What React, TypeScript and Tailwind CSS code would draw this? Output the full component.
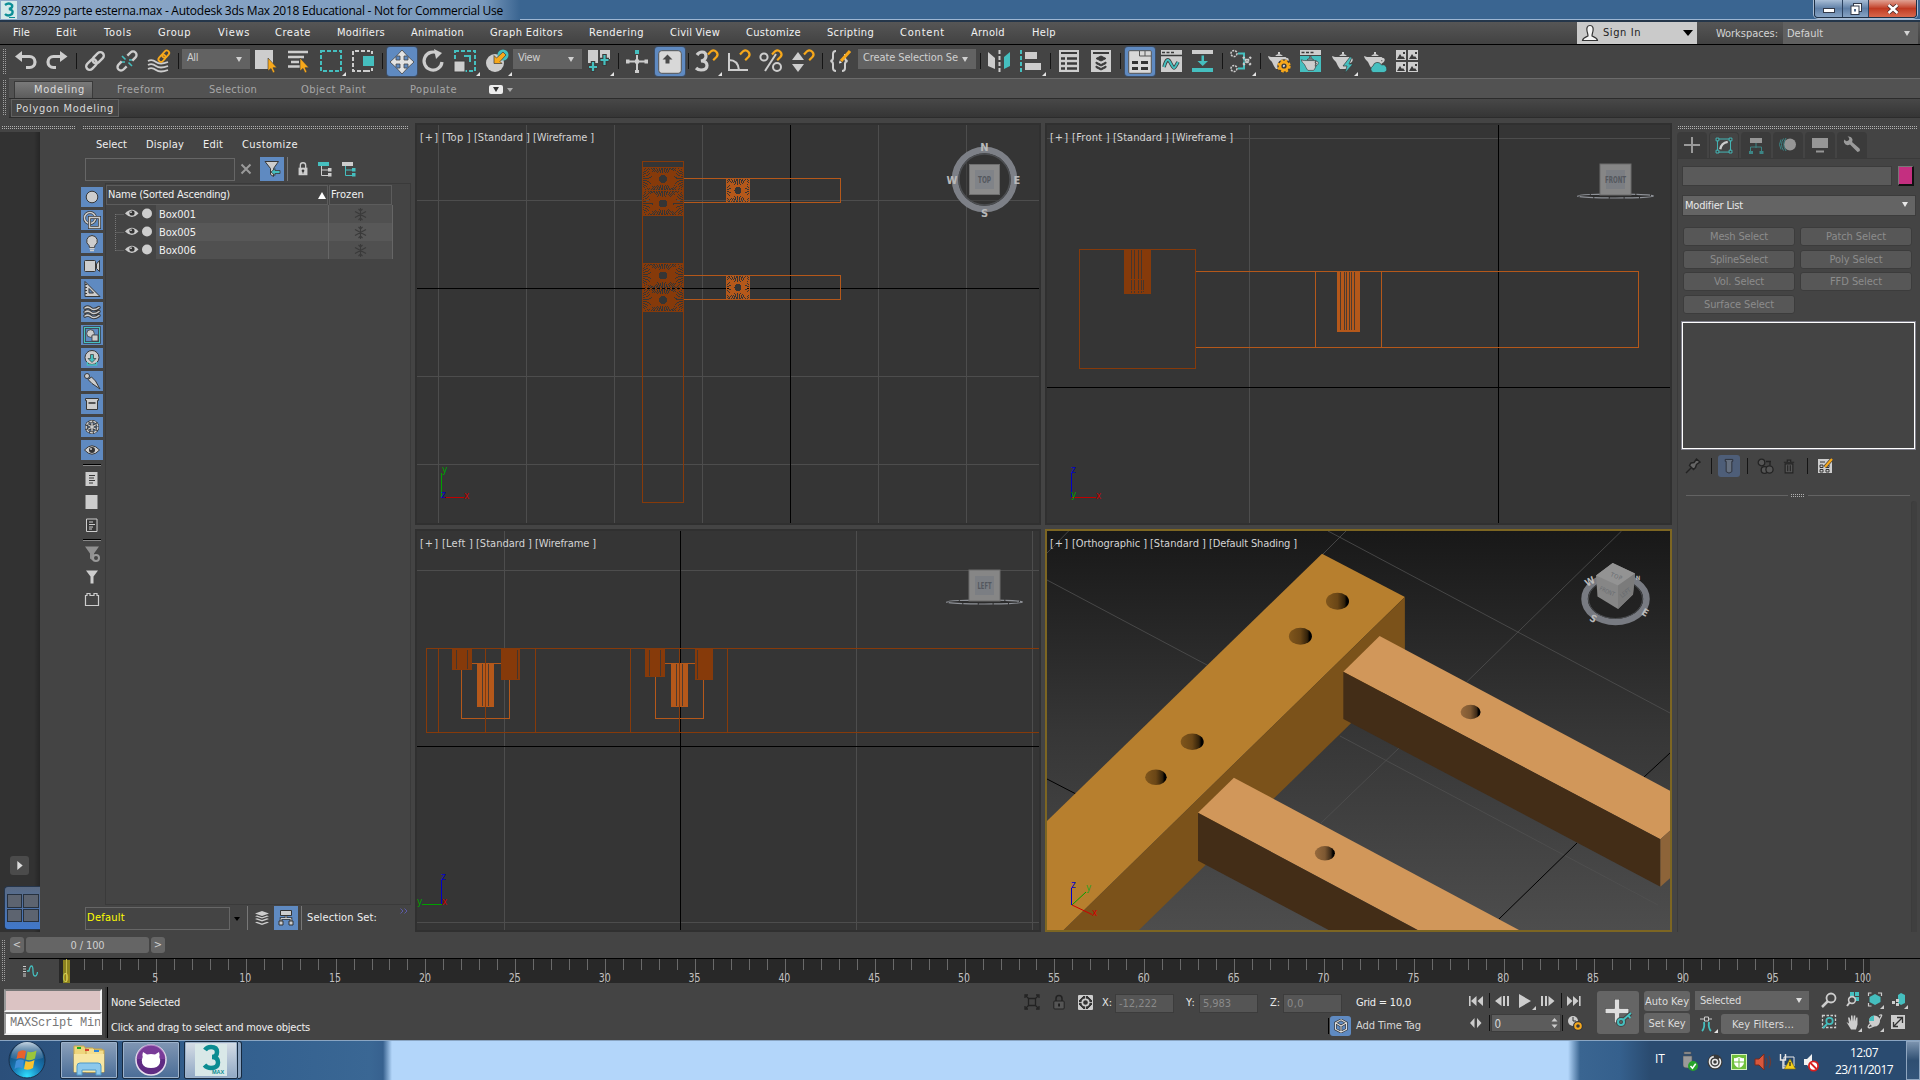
import { useLayoutEffect, useRef } from "react";
import type { ReactNode } from "react";

const G = "#cdcdcd";
const T = "#45bfbf";
const O = "#f7a81b";
const D = "#3a3a3a";

/* Text run whose tracking is adjusted so that it spans `w` pixels. */
function Txt({ w, className = "", children }: { w?: number; className?: string; children: string }) {
  const ref = useRef<HTMLSpanElement>(null);
  useLayoutEffect(() => {
    const el = ref.current;
    if (!el || !w) return;
    el.style.letterSpacing = "0px";
    const natural = el.getBoundingClientRect().width;
    el.style.letterSpacing = `${(w - natural) / children.length}px`;
  }, [w, children]);
  return (
    <span ref={ref} className={`inline-block justify-self-start whitespace-pre ${className}`}>
      {children}
    </span>
  );
}

function Ic({ children, className = "", fly = false }: { children: ReactNode; className?: string; fly?: boolean }) {
  return (
    <svg viewBox="0 0 24 24" className={`h-6 w-6 shrink-0 overflow-visible ${className}`} fill="none">
      {children}
      {fly && <path d="M27 23v4h-4z" fill="#e4e4e4" />}
    </svg>
  );
}

function Sep({ className = "" }: { className?: string }) {
  return <div className={`h-4 w-px shrink-0 bg-[#151515] ${className}`} />;
}

function Down({ className = "" }: { className?: string }) {
  return (
    <svg viewBox="0 0 6 5" className={`h-[5px] w-[6px] shrink-0 ${className}`}>
      <path d="M0 0h6L3 5z" fill="currentColor" />
    </svg>
  );
}

/* Drag handles: two dotted rules, horizontal or vertical. */
function Dots({ className }: { className: string }) {
  return (
    <div className={`flex h-[3px] flex-col justify-between ${className}`}>
      <div className="h-px bg-[repeating-linear-gradient(90deg,#b0b0b0_0_1px,transparent_1px_2px)]" />
      <div className="h-px bg-[repeating-linear-gradient(90deg,#b0b0b0_0_1px,transparent_1px_2px)]" />
    </div>
  );
}

function VDots({ className }: { className: string }) {
  return (
    <div className={`flex w-[3px] shrink-0 justify-between ${className}`}>
      <div className="w-px bg-[repeating-linear-gradient(180deg,#a0a0a0_0_1px,transparent_1px_2px)]" />
      <div className="w-px bg-[repeating-linear-gradient(180deg,#a0a0a0_0_1px,transparent_1px_2px)]" />
    </div>
  );
}

const magnet = <path d="M13 5.500l3-3.200a4 4 0 0 1 5.600 5.600l-3.400 3.400" stroke={O} strokeWidth="2.200" />;
const teapot = <path d="M5 8h14l-1 3c1.400 2 1.200 5-2 9H9c-2-2.500-2.500-4-4-7C3.500 11 1.500 10 1 7l3 1zM8 7q4-4 8 0zM11 3h2v2h-2zM18 9c5-1 5 4 0 6v-2c2-1 2-2 0-2z" fill={G} />;

function TitleBar() {
  return (
    <div className="flex h-[22px] items-start border-b-2 border-[#24364a] bg-[#3a6591] shadow-[inset_0_-1px_0_#9db6d3]">
      <div className="flex h-[20px] w-[520px] items-center bg-linear-to-r from-[#8fa9c8] via-[#7a9abd] via-93% to-[#3a6591]">
        <svg viewBox="0 0 16 18" className="ml-px h-[18px] w-4">
          <rect width="16" height="18" fill="#d5e9ea" />
          <path d="M4 4q4-3 7 0 1 3-3 4 5 1 3 5-4 3-7 0" fill="none" stroke="#0c8e96" strokeWidth="2.400" />
          <path d="M8 16.500h6" stroke="#0c8e96" />
        </svg>
        <Txt w={482} className="ml-1 mt-0.5 font-['Open_Sans'] text-[12px] leading-[18px] text-black">
          872929 parte esterna.max - Autodesk 3ds Max 2018 Educational - Not for Commercial Use
        </Txt>
      </div>
      <div className="flex-1" />
      <div className="mr-[3px] flex h-[18px] overflow-hidden rounded-b-[4px] border border-t-0 border-[#1d2f45] ring-1 ring-[#a9bcd3]">
        <div className="flex w-7 items-end justify-center border-r border-[#2b4260] bg-linear-to-b from-[#a8bdd6] via-[#5f7fa6] to-[#86a3c4] pb-1">
          <div className="h-[5px] w-3 border border-[#333a4a] bg-white" />
        </div>
        <div className="flex w-[26px] items-center justify-center border-r border-[#2b4260] bg-linear-to-b from-[#a8bdd6] via-[#5f7fa6] to-[#86a3c4]">
          <svg viewBox="0 0 12 12" className="size-3">
            <rect x="3.500" y=".5" width="8" height="8" fill="#fff" stroke="#333a4a" />
            <rect x="1" y="3" width="8" height="8.500" fill="#fff" stroke="#333a4a" />
            <rect x="4" y="6" width="2" height="2.500" fill="#4a6488" />
          </svg>
        </div>
        <div className="flex w-[47px] items-center justify-center bg-linear-to-b from-[#e0a193] via-[#c03a22] to-[#d8674c]">
          <svg viewBox="0 0 12 10" className="h-[10px] w-3">
            <path d="M1.500 1l9 8M10.500 1l-9 8" stroke="#4a2a2a" strokeWidth="4" />
            <path d="M1.500 1l9 8M10.500 1l-9 8" stroke="#fff" strokeWidth="2.400" />
          </svg>
        </div>
      </div>
    </div>
  );
}

const MENUS: [string, number][] = [
  ["File", 17], ["Edit", 21], ["Tools", 28], ["Group", 33], ["Views", 32], ["Create", 36], ["Modifiers", 48], ["Animation", 53],
  ["Graph Editors", 73], ["Rendering", 55], ["Civil View", 50], ["Customize", 55], ["Scripting", 47], ["Content", 45], ["Arnold", 34], ["Help", 24],
];

function MenuBar() {
  return (
    <div className="flex h-[23px] border-b border-black bg-linear-to-b from-[#565656] to-[#424242] text-[#f2f2f2]">
      <div className="ml-[13px] grid grid-cols-[43px_48px_54px_60px_57px_62px_74px_79px_99px_81px_76px_81px_73px_71px_61px_30px] leading-[22px]">
        {MENUS.map(([m, w]) => (
          <Txt key={m} w={w}>{m}</Txt>
        ))}
      </div>
      <div className="flex-1" />
      <div className="flex w-[120px] items-center bg-[#cacaca] text-[#222]">
        <svg viewBox="0 0 18 18" className="ml-1 h-[18px] w-[18px]">
          <path d="M9 1.500c3 0 3.500 3 3 5.500-.4 2-1 3-1 5 2 1 5 1.500 5.500 4.500h-15c.5-3 3.500-3.500 5.500-4.500 0-2-.6-3-1-5-.5-2.500 0-5.500 3-5.500z" fill="#f4f4f4" stroke="#333" strokeWidth="1.200" />
        </svg>
        <Txt w={38} className="mt-px ml-1">Sign In</Txt>
        <svg viewBox="0 0 10 6" className="ml-auto mr-1 h-[6px] w-[10px]"><path d="M0 0h10L5 6z" fill="#000" /></svg>
      </div>
      <Txt w={62} className="ml-[19px] leading-[24px] text-[#d4d4d4]">Workspaces:</Txt>
      <div className="ml-[5px] mr-[2px] flex w-[135px] items-center bg-[#606060] pl-1 text-[#d4d4d4]">
        <Txt w={36} className="mt-0.5">Default</Txt>
        <Down className="ml-auto mr-2" />
      </div>
    </div>
  );
}

function Combo({ className, w, children }: { className: string; w: number; children: string }) {
  return (
    <div className={`flex h-5 shrink-0 items-center bg-[#626262] pl-[5px] pr-[8px] text-[#d0d0d0] ${className}`}>
      <Txt w={w} className="-mt-px">{children}</Txt>
      <Down className="ml-auto" />
    </div>
  );
}

function Toolbar() {
  return (
    <div className="flex h-[33px] items-start bg-[#444] pt-1 pl-[3px]">
      <VDots className="h-[26px]" />
      <Ic className="ml-2">
        <path d="M6 7.500h9.500a5.500 5.500 0 0 1 0 11H12" stroke={G} strokeWidth="3.200" />
        <path d="M1 7.500L8 2v11z" fill={G} />
      </Ic>
      <Ic className="ml-1.5">
        <path d="M18 7.500H9.500a5.500 5.500 0 0 0 0 11H12" stroke={G} strokeWidth="3.200" />
        <path d="M23.500 7.500L16 2v11z" fill={G} />
      </Ic>
      <Sep className="ml-2 mt-1 mr-px" />
      <Ic className="ml-[5px]">
        <g transform="rotate(-45 12 12)" stroke={G} strokeWidth="2.400">
          <rect x="1" y="8.500" width="12" height="7" rx="3.500" />
          <rect x="10" y="8.500" width="13" height="7" rx="3.500" />
        </g>
      </Ic>
      <Ic className="ml-2">
        <g transform="rotate(-45 12 12)" stroke={G} strokeWidth="2.400">
          <path d="M8 8.500H3.500a3.500 3.500 0 0 0 0 7H8M16 8.500h4.500a3.500 3.500 0 0 1 0 7H16" />
        </g>
        <path d="M7 7l3.500 3.500M13.500 13.500L17 17M7 13l3 0M14 11h3" stroke={T} strokeWidth="1.600" />
      </Ic>
      <Ic className="ml-2">
        <path d="M1 12q4-2 8 1t12 0M1 16q4-2 8 1t12 0M1 20q4-2 8 1t12 0" stroke={G} strokeWidth="1.800" />
        <g transform="rotate(-48 17 7)" stroke={O} strokeWidth="1.800">
          <rect x="10" y="4.500" width="8" height="5" rx="2.500" />
          <rect x="15.500" y="4.500" width="8" height="5" rx="2.500" />
        </g>
      </Ic>
      <Sep className="ml-[7px] mt-1 mr-px" />
      <Combo className="ml-[2px] w-[68px]" w={11}>All</Combo>
      <Ic className="ml-1">
        <path d="M1 1h18v19H1z" fill={G} />
        <path d="M14 9v13l3-2.600 2 4.600 2-.9-2-4.400h4z" fill={O} stroke={D} strokeWidth=".6" />
      </Ic>
      <Ic className="ml-[9px]">
        <path d="M1 3h20M1 8h16M4 13h8M1 17.500h12" stroke={G} strokeWidth="2.600" />
        <path d="M13 9v13l3-2.600 2 4.600 2-.9-2-4.400h4z" fill={O} stroke={D} strokeWidth=".6" />
      </Ic>
      <Ic className="ml-2" fly>
        <rect x="2" y="2" width="20" height="20" stroke={T} strokeWidth="2" strokeDasharray="4 2" />
      </Ic>
      <Ic className="ml-[8px]">
        <path d="M14 2H2v20h14" stroke={G} strokeWidth="2" strokeDasharray="4 2" />
        <path d="M16 2h5v3M16 22h5v-4" stroke={G} strokeWidth="2" strokeDasharray="3 2" />
        <path d="M12 7h11v10H12z" fill={T} />
      </Ic>
      <Sep className="ml-[7px] mt-1 mr-px" />
      <div className="-mt-0.5 ml-[3px] flex h-[29px] w-[30px] items-center justify-center rounded-[3px] bg-[#5f8ac1] shadow-[0_0_0_1px_#3d4d63]">
        <svg viewBox="0 0 24 24" className="size-6">
          <path d="M12 0l5.500 6h-3.500v4h4V6.500l6 5.500-6 5.500V14h-4v4h3.500L12 24l-5.500-6H10v-4H6v3.500L0 12l6-5.500V10h4V6H6.500z" fill="#e3e3e3" stroke="#444" strokeWidth=".8" />
        </svg>
      </div>
      <Ic className="ml-[4px]">
        <path d="M17 4.500A9 9 0 1 0 21 13" stroke={G} strokeWidth="3.200" />
        <path d="M13 0l8 4-6 6z" fill={G} />
      </Ic>
      <Ic className="ml-2" fly>
        <rect x="2" y="2" width="20" height="20" stroke={T} strokeWidth="2" strokeDasharray="4 2" />
        <path d="M1 12h11v11H1z" fill={G} stroke={D} />
        <path d="M11 7h6v6" stroke={T} strokeWidth="2" />
      </Ic>
      <Ic className="ml-2" fly>
        <circle cx="10" cy="14" r="9" fill={G} />
        <circle cx="18" cy="6" r="5.500" fill={T} />
        <path d="M18 3l3 3-6 6.500 2 2H9v-8l2.500 2.500z" fill={O} stroke={D} strokeWidth=".7" />
      </Ic>
      <Combo className="ml-1 w-[69px]" w={22}>View</Combo>
      <Ic className="ml-[5px]" fly>
        <path d="M1 1h10v13H1zM13 1h10v9H13z" fill={G} />
        <path d="M6 12v11M1.500 18h9M17.500 5v12M13 11h9" stroke={D} strokeWidth="4.500" />
        <path d="M6 13v9M2 18h8M17.500 6v10M13.500 11h8" stroke={T} strokeWidth="2.200" />
      </Ic>
      <Sep className="ml-[7px] mt-1 mr-px" />
      <Ic className="ml-[5px]">
        <path d="M12 6v17M2 12.500h20" stroke={G} strokeWidth="2" />
        <path d="M10 21h4v3h-4zM1 10.500h3.500v4H1zM19.500 10.500H23v4h-3.500zM10 10.500h4v4h-4z" fill={G} />
        <path d="M10 1h4v4h-4z" fill={T} />
      </Ic>
      <div className="-mt-0.5 ml-[6px] flex h-[29px] w-[30px] items-center justify-center rounded-[3px] bg-[#5f8ac1] shadow-[0_0_0_1px_#3d4d63]">
        <svg viewBox="0 0 24 24" className="size-6">
          <rect x=".7" y=".7" width="22.600" height="22.600" rx="3" fill="#d8d8d8" stroke="#555" />
          <path d="M9.500 4.500l5 5h-3v4h-4v-4h-3z" fill="#4a4a4a" />
        </svg>
      </div>
      <Sep className="ml-[3px] mt-1 mr-px" />
      <Ic className="ml-[5px]" fly>
        <path d="M2 6q2-3 5-3 4 0 4 4t-5 5q6 0 6 4.500T6 21q-3 0-5-2" stroke={G} strokeWidth="3.200" />
        {magnet}
      </Ic>
      <Ic className="ml-2">
        <path d="M2 4v17h19M2 11q9 0 10 10" stroke={G} strokeWidth="2" />
        {magnet}
      </Ic>
      <Ic className="ml-2">
        <circle cx="5" cy="8" r="3.600" stroke={G} strokeWidth="2" />
        <circle cx="18" cy="18" r="4" stroke={G} strokeWidth="2" />
        <path d="M6 22L17 5" stroke={G} strokeWidth="2" />
        {magnet}
      </Ic>
      <Ic className="ml-2">
        <path d="M1 11l6-8 6 8zM1 15h12l-6 8z" fill={G} />
        {magnet}
      </Ic>
      <Sep className="ml-[7px] mt-1 mr-px" />
      <Ic className="ml-[5px]">
        <path d="M7 2Q4 2 4 5v4q0 2.500-2.500 3Q4 12.500 4 15v4q0 3 3 3M13 22q3 0 3-3v-4q0-2.500 2.500-3-2.500-.5-2.500-3V5" stroke={G} strokeWidth="2" />
        <path d="M12 12L21 2" stroke={O} strokeWidth="3.200" />
        <path d="M10 14.500l.6-3 2.400 2.200z" fill="#eee" />
      </Ic>
      <Combo className="ml-[5px] w-[118px]" w={95}>Create Selection Se</Combo>
      <Sep className="ml-1 mt-1 mr-px" />
      <Ic className="ml-[5px]">
        <path d="M1 3l7 6v11l-7-3z" fill={G} />
        <path d="M23 3l-6 5v12l6-3z" fill={T} />
        <path d="M12.500 1v22" stroke={G} strokeWidth="2" strokeDasharray="4 2" />
      </Ic>
      <Ic className="ml-2" fly>
        <path d="M2 1v22" stroke={T} strokeWidth="2" strokeDasharray="4 2" />
        <path d="M6 3h12v7H6zM6 14h16v7H6z" fill={G} />
      </Ic>
      <Sep className="ml-[7px] mt-1 mr-px" />
      <Ic className="ml-[6px]">
        <path d="M1 1h20v22H1z" fill={G} />
        <path d="M3 4h16" stroke={D} strokeWidth="2" />
        <path d="M3 9.500h4M9 9.500h10M3 14.500h4M9 14.500h10M3 19.500h4M9 19.500h10" stroke={D} strokeWidth="2.400" />
      </Ic>
      <Ic className="ml-2">
        <path d="M1 1h20v22H1z" fill={G} />
        <path d="M3 4h16" stroke={D} strokeWidth="2" />
        <path d="M11 7l5 2.500-5 2.500-5-2.500zM6 13l5 2.500 5-2.500v1.500l-5 2.500-5-2.500zM6 17l5 2.500 5-2.500v1.500l-5 2.500-5-2.500z" fill={D} stroke={D} />
      </Ic>
      <Sep className="ml-1.5 mt-1 mr-px" />
      <div className="-mt-0.5 ml-[3px] flex h-[29px] w-[30px] items-center justify-center rounded-[3px] bg-[#5f8ac1] shadow-[0_0_0_1px_#3d4d63]">
        <svg viewBox="0 0 24 24" className="size-6">
          <rect x=".7" y=".7" width="22.600" height="22.600" rx="1" fill="#d8d8d8" stroke="#555" />
          <path d="M11.500 1v5H23M17 1v5" stroke="#555" fill="none" />
          <path d="M4 11h6v3H4zM13 11h7v3h-7zM4 17h6v3H4zM13 17h7v3h-7z" fill="#333" />
        </svg>
      </div>
      <Ic className="ml-[5px]">
        <path d="M1 1h21v22H1z" fill={G} />
        <path d="M1 6.500h21M2 3.500h3M6.500 3.500h3M11 3.500h3" stroke={D} strokeWidth="1.600" />
        <path d="M4 18q3-11 6-5t4 6 4-6" stroke={D} strokeWidth="3.600" />
        <path d="M4 18q3-11 6-5t4 6 4-6" stroke={T} strokeWidth="2" />
      </Ic>
      <Ic className="ml-[7px]">
        <path d="M1 1h21v4H1z" fill={G} />
        <path d="M1 19h21v4H1zM10.500 6.500h2.500V12h4l-5.300 5L6.500 12h4z" fill={T} />
      </Ic>
      <Sep className="ml-[7px] mt-1 mr-px" />
      <Ic className="ml-[5px]" fly>
        <path d="M9 4.500h6v7M9 19.500h6v-7" stroke={T} strokeWidth="2" />
        <g stroke={G} strokeWidth="1.500" strokeDasharray="2 1">
          <circle cx="5" cy="4.500" r="3" /><circle cx="5" cy="19.500" r="3" />
          <path d="M14 8l8 8M22 8l-8 8" strokeWidth="2.400" />
        </g>
      </Ic>
      <Sep className="ml-[7px] mt-1 mr-px" />
      <Ic className="ml-[5px]">
        {teapot}
        <circle cx="17" cy="17" r="4" stroke={D} strokeWidth="5.500" />
        <circle cx="17" cy="17" r="4" stroke={O} strokeWidth="2.800" />
        <circle cx="17" cy="17" r="5.800" stroke={O} strokeWidth="1.800" strokeDasharray="2.600 2" />
      </Ic>
      <Ic className="ml-2">
        <path d="M1 1h21v5H1z" fill={G} />
        <path d="M1 7h21v16H1z" fill={T} />
        <path d="M2.500 3.500h3M7 3.500h3M11.500 3.500h3" stroke={D} strokeWidth="1.600" />
        <g transform="translate(1.500 5) scale(.82)" stroke={D} strokeWidth=".8">{teapot}</g>
      </Ic>
      <Ic className="ml-2" fly>
        {teapot}
        <path d="M19 8l-7 9h4l-2 7 8-9h-4l3-7z" fill={T} stroke={D} strokeWidth=".7" />
      </Ic>
      <Ic className="ml-2">
        {teapot}
        <path d="M10 23.500a3.500 3.500 0 0 1 0-6.500 4.500 4.500 0 0 1 8.500-1 3.800 3.800 0 0 1 2.500 7.500z" fill={T} stroke={D} strokeWidth=".7" />
      </Ic>
      <Ic className="ml-2">
        <path d="M1 1h10v10H1zM13 1h10v10H13zM1 13h10v10H1zM13 13h10v10H13z" fill={G} />
        <path d="M2 10l3-5 2 3 1-1 2 3zM14 10l3-5 2 3 1-1 2 3zM2 22l3-5 2 3 1-1 2 3zM14 22l3-5 2 3 1-1 2 3zM8 3h2v2H8zM20 3h2v2h-2zM8 15h2v2H8zM20 15h2v2h-2z" fill={D} />
      </Ic>
    </div>
  );
}

function Ribbon() {
  return (
    <div className="flex h-10 pl-[3px]">
      <VDots className="mt-0.5 h-9" />
      <div className="ml-[3px] flex flex-1 flex-col border-t border-[#6b6b6b]">
        <div className="flex h-[19px] bg-[#525252] pl-[5px] leading-[21px] text-[#a6a6a6]">
          <div className="mt-0.5 flex h-[17px] w-[79px] border border-b-0 border-[#3a3a3a] bg-linear-to-b from-[#7a7a7a] to-[#5c5c5c] pl-[19px] leading-[16px] text-[#dcdcdc]">
            <Txt w={51}>Modeling</Txt>
          </div>
          <Txt w={48} className="ml-6">Freeform</Txt>
          <Txt w={48} className="ml-11">Selection</Txt>
          <Txt w={65} className="ml-11">Object Paint</Txt>
          <Txt w={47} className="ml-11">Populate</Txt>
          <div className="mt-1.5 ml-8 flex h-[9px] w-[14px] items-center justify-center rounded-[2px] bg-[#ececec] text-[#333]">
            <Down />
          </div>
          <svg viewBox="0 0 6 4" className="mt-[9px] ml-1 h-1 w-[6px]"><path d="M0 0h6L3 4z" fill="#aaa" /></svg>
        </div>
        <div className="flex h-5 border-y border-[#2c2c2c] bg-linear-to-b from-[#484848] to-[#353535] pl-0.5">
          <div className="flex h-[18px] w-[108px] border border-[#606060] bg-[#454545] pl-1 leading-[17px] text-[#dadada]">
            <Txt w={98}>Polygon Modeling</Txt>
          </div>
        </div>
      </div>
    </div>
  );
}

const S = "#383838";
const FILTERS: ReactNode[] = [
  <circle cx="11" cy="10" r="5.800" fill={G} stroke={S} />,
  <><circle cx="9" cy="8" r="5.500" stroke={S} strokeWidth="3" /><circle cx="9" cy="8" r="5.500" stroke={G} strokeWidth="1.500" /><path d="M8.500 7.500h10v10h-10z" stroke={S} strokeWidth="3" /><path d="M8.500 7.500h10v10h-10z" stroke={G} strokeWidth="1.500" /></>,
  <><path d="M11 2.500a5.500 5.500 0 0 1 3 10l-.5 2h-5l-.5-2a5.500 5.500 0 0 1 3-10z" fill={G} stroke={S} /><path d="M8.500 15.500h5M9 17.500h4" stroke={G} strokeWidth="1.400" /></>,
  <path d="M3.500 5.500q0-1 1-1h9q1 0 1 1v9q0 1-1 1h-9q-1 0-1-1zM15.500 8l3-3.500v11l-3-3z" fill={G} stroke={S} />,
  <><path d="M4 2.500v15h15z" fill={G} stroke={S} /><path d="M8 9.500v4.500h4.500z" fill="#5f8ac1" stroke={S} /><path d="M4 5.500h2M4 8.500h2M4 11.500h2M4 14.500h2" stroke={S} /></>,
  <g strokeLinecap="round"><path d="M4 6q3-2 6 .5t8-1M4 10q3-2 6 .5t8-1M4 14q3-2 6 .5t8-1" stroke={S} strokeWidth="3.400" /><path d="M4 6q3-2 6 .5t8-1M4 10q3-2 6 .5t8-1M4 14q3-2 6 .5t8-1" stroke={G} strokeWidth="1.500" /></g>,
  <><path d="M3.500 2.500h15v15h-15z" fill="#5f8ac1" stroke={S} strokeWidth="2.600" /><path d="M3.500 2.500h15v15h-15z" stroke={T} strokeWidth="1.200" /><circle cx="9.500" cy="8.500" r="3.800" fill={G} stroke={S} strokeWidth=".8" /><path d="M11 10h6v6h-6z" fill={G} stroke={S} strokeWidth=".8" /></>,
  <><circle cx="11" cy="9.500" r="7" fill={G} stroke={S} /><path d="M9.500 6.500h3v4h2.500l-4 4-4-4h2.500z" fill={T} stroke={S} strokeWidth=".7" /><path d="M6.500 14v3h9v-3" stroke={T} strokeWidth="1.500" /></>,
  <><circle cx="6" cy="5" r="2.500" fill={G} stroke={S} /><path d="M7 8.500L10.500 6l4 4 4.500 8-8-5.500z" fill={G} stroke={S} /></>,
  <><path d="M4.500 4.500h13v2h-1v9h-11v-9h-1z" fill={G} stroke={S} /><path d="M7.500 9h7" stroke={S} strokeWidth="1.600" /></>,
  <><path d="M11 3v14M5 6.500l12 7M17 6.500l-12 7" stroke={S} strokeWidth="3" /><path d="M11 3v14M5 6.500l12 7M17 6.500l-12 7" stroke={G} strokeWidth="1.400" /><circle cx="11" cy="10" r="5.800" stroke={S} strokeWidth="2.600" /><circle cx="11" cy="10" r="5.800" stroke={G} strokeWidth="1.400" strokeDasharray="3 1" /></>,
  <><path d="M3.500 10q7.500-8.500 15 0-7.500 8.500-15 0z" fill={G} stroke={S} /><circle cx="11" cy="10" r="3" fill="#333" /><circle cx="10" cy="9" r="1" fill={G} /></>,
];

const DISPLAY_ICONS: ReactNode[] = [
  <><path d="M4.500 3h12v14h-12z" fill={G} /><path d="M8 6.500h6M8 9h5M8 11.500h6M8 14h4" stroke={S} /></>,
  <path d="M4.500 3h12v14h-12z" fill={G} />,
  <><path d="M5.500 4h10.500v12.500H5.500z" fill={S} stroke={G} /><path d="M8 7h4M8 9.500h6M8 12h4M8 14h3" stroke={G} /></>,
];

const SNOW = <path d="M6.500 0v13M1 3.500l11 6M12 3.500l-11 6M4.500 1l2 2 2-2M4.500 12l2-2 2 2" stroke="#3a3a3a" strokeWidth="1.100" fill="none" />;

function Explorer() {
  return (
    <div className="flex w-[415px] shrink-0 flex-col pl-[40px]">
      <div className="mt-px grid h-[24px] grid-cols-[50px_57px_39px_60px] pl-[56px] leading-[23px] text-[#f0f0f0]">
        <Txt w={31}>Select</Txt>
        <Txt w={38}>Display</Txt>
        <Txt w={20}>Edit</Txt>
        <Txt w={56}>Customize</Txt>
      </div>
      <div className="flex h-[26px] pl-[45px]">
        <div className="mt-px h-[23px] w-[150px] border border-[#666]" />
        <svg viewBox="0 0 12 12" className="mt-1.5 ml-[5px] size-3"><path d="M1.500 1.500l9 9M10.500 1.500l-9 9" stroke="#9a9a9a" strokeWidth="2" /></svg>
        <div className="ml-2 flex size-6 items-center justify-center bg-[#5f8ac1]">
          <svg viewBox="0 0 18 18" className="size-[18px]">
            <path d="M2 1.500h13.500l-5 7v8l-3-2v-6z" fill={G} stroke={S} />
            <path d="M8 12l4-3.500v2h5v3h-5v2z" fill={T} stroke={S} strokeWidth=".8" />
          </svg>
        </div>
        <div className="ml-[3px] h-6 w-px bg-[#777]" />
        <svg viewBox="0 0 12 18" className="mt-1 ml-[9px] h-[16px] w-3">
          <path d="M3 8V5a3 3 0 0 1 6 0v3" fill="none" stroke={G} strokeWidth="1.500" />
          <path d="M1 7.500h10V16H1z" fill={G} />
          <circle cx="6" cy="11" r="1.500" fill={S} /><path d="M5.500 11h1v3h-1z" fill={S} />
        </svg>
        <svg viewBox="0 0 16 16" className="mt-1 ml-2 size-4">
          <path d="M1 1h11v4H1z" fill={T} /><path d="M4.500 5v9.500H11M4.500 9H11" stroke={G} fill="none" /><path d="M11 7h3.500v3.500H11zM11 12h3.500v3.500H11z" fill={G} />
        </svg>
        <svg viewBox="0 0 16 16" className="mt-1 ml-2 size-4">
          <path d="M1 1h11v4H1z" fill={G} /><path d="M4.500 5v9.500H11M4.500 9H11" stroke={T} fill="none" /><path d="M11 7h3.500v3.500H11zM11 12h3.500v3.500H11z" fill={T} />
        </svg>
      </div>
      <div className="flex h-[722px] pl-[41px]">
        <div className="flex w-6 shrink-0 flex-col pt-1">
          <div className="flex flex-col gap-[3px]">
            {FILTERS.map((f, i) => (
              <svg key={i} viewBox="0 0 22 20" className="h-5 w-[22px] bg-[#5f8ac1]" fill="none">{f}</svg>
            ))}
          </div>
          <div className="mt-[4px] ml-0.5 h-[2px] w-[18px] border-t border-black bg-[#888]" />
          <div className="mt-[3px] flex flex-col gap-[3px]">
            {DISPLAY_ICONS.map((f, i) => (
              <svg key={i} viewBox="0 0 22 20" className="h-5 w-[22px]" fill="none">{f}</svg>
            ))}
          </div>
          <div className="mt-[4px] ml-0.5 h-[2px] w-[18px] border-t border-black bg-[#888]" />
          <div className="mt-[3px] flex flex-col gap-[3px]">
            <svg viewBox="0 0 22 20" className="h-5 w-[22px]" fill="none"><path d="M4 2.500h14l-5 7v8l-4-3v-5z" fill="#909090" /><circle cx="15" cy="14" r="3" fill="#444" stroke="#999" strokeWidth="2" /></svg>
            <svg viewBox="0 0 22 20" className="h-5 w-[22px]" fill="none"><path d="M5 3.500h12l-4.500 6v7h-3v-7z" fill={G} /></svg>
            <svg viewBox="0 0 22 20" className="h-5 w-[22px]" fill="none"><path d="M4.500 15.500v-10h1.500v-2h3v2h4v-2h3v2h1.500v10z" stroke={G} strokeWidth="1.200" /></svg>
          </div>
        </div>
        <div className="flex w-[306px] shrink-0 flex-col border border-[#3a3a3a]">
          <div className="flex h-5 gap-px pt-px text-[#f0f0f0]">
            <div className="flex h-5 w-[222px] items-center border border-[#5c5c5c] pl-px pr-px">
              <Txt w={122}>Name (Sorted Ascending)</Txt>
              <svg viewBox="0 0 8 7" className="ml-auto h-[7px] w-2"><path d="M0 7h8L4 0z" fill="#fff" /></svg>
            </div>
            <div className="flex h-5 w-[63px] items-center border border-[#5c5c5c] pl-px">
              <Txt w={33}>Frozen</Txt>
            </div>
          </div>
          <div className="flex pt-[1px]">
            <svg viewBox="0 0 50 54" className="h-[54px] w-[50px]">
              <path d="M9.500 9v37M9.500 9.500H18M9.500 27.500H18M9.500 45.500H18" stroke="#777" strokeDasharray="1 1" fill="none" />
              {[0, 18, 36].map((y) => (
                <g key={y}>
                  <path d={`M19 ${y + 8.5}q7-7.500 13.500 0-6.500 7-13.500 0z`} fill={G} />
                  <circle cx="26" cy={y + 8} r="2.600" fill="#333" /><circle cx="25" cy={y + 7.2} r=".9" fill={G} />
                  <circle cx="41" cy={y + 8.5} r="5" fill={G} />
                </g>
              ))}
            </svg>
            <div className="flex w-[237px] flex-col border-r border-[#666] text-[#f0f0f0]">
              {["Box001", "Box005", "Box006"].map((n, i) => (
                <div key={n} className={`flex h-[18px] ${i === 1 ? "bg-[#585858]" : "bg-[#505050]"}`}>
                  <div className="w-[173px] border-r border-[#666] pl-[3px] leading-[19px]"><Txt w={37}>{n}</Txt></div>
                  <svg viewBox="0 0 13 13" className="mt-[3px] ml-[25px] size-[13px]">{SNOW}</svg>
                </div>
              ))}
            </div>
          </div>
        </div>
      </div>
      <div className="mt-px flex h-[25px] items-start pl-[45px]">
        <div className="mt-px h-[23px] w-[145px] border border-[#666] pl-px leading-[19px] text-[#ffff00]"><Txt w={38}>Default</Txt></div>
        <svg viewBox="0 0 6 4" className="mt-[11px] ml-1 h-1 w-[6px]"><path d="M0 0h6L3 4z" fill="#000" /></svg>
        <div className="ml-[7px] h-6 w-px bg-[#777]" />
        <svg viewBox="0 0 16 16" className="mt-1 ml-1.5 size-4"><path d="M8 1l7 2.500L8 6 1 3.500zM8 8.500l-7-2.200 2-.8 5 1.700 5-1.700 2 .8zM8 11.500l-7-2.500 2-.8 5 1.700 5-1.700 2 .8zM8 15l-7-2.500 2-.8 5 1.700 5-1.700 2 .8z" fill={G} /></svg>
        <div className="ml-1 flex size-6 items-center justify-center bg-[#5f8ac1]">
          <svg viewBox="0 0 18 18" className="size-[18px]"><path d="M9 6v4M4 12V9.500h10V12" stroke="#333" strokeWidth="2.500" fill="none" /><path d="M9 6v4M4 12V9.500h10V12" stroke={G} fill="none" /><path d="M3.500 1.500h11v5h-11zM2 12h4v4H2zM12 12h4v4h-4z" fill={G} stroke="#333" /></svg>
        </div>
        <div className="ml-[3px] h-6 w-px bg-[#777]" />
        <Txt w={70} className="ml-[5px] leading-[24px] text-[#f0f0f0]">Selection Set:</Txt>
        <svg viewBox="0 0 8 6" className="mt-0.5 mr-[7px] ml-auto h-[6px] w-2"><path d="M.5.5L3 3 .5 5.500M4.500.5L7 3 4.500 5.500" stroke="#5b5ba8" fill="none" /></svg>
      </div>
    </div>
  );
}

const DK = "#863a0a";
const LT = "#b5581a";

/* Fan of triangulation edges running from a hole to the faces of its box. */
function Burst({ x0, y0, x1, y1, cx, cy, r, c }: { x0: number; y0: number; x1: number; y1: number; cx: number; cy: number; r: number; c: string }) {
  let d = "";
  for (let x = x0; x <= x1; x += 3) d += `M${cx} ${cy}L${x} ${y0}M${cx} ${cy}L${x} ${y1}`;
  for (let y = y0; y <= y1; y += 2) d += `M${cx} ${cy}L${x0} ${y}M${cx} ${cy}L${x1} ${y}`;
  return (
    <g>
      <path d={d} stroke={c} />
      <rect x={x0} y={y0} width={x1 - x0} height={y1 - y0} stroke={c} fill="none" />
      <ellipse cx={cx} cy={cy} rx={r * 2} ry={r * 1.6} fill={c} />
      <circle cx={cx} cy={cy} r={r} fill="#353535" />
    </g>
  );
}

function FlatCube({ x, y, label, w }: { x: number; y: number; label: string; w: number }) {
  return (
    <g>
      <ellipse cx={x + 15.5} cy={y + 32} rx="38" ry="2" fill="#2b2b2b" stroke="#8f9298" strokeWidth="1.200" strokeDasharray="14 1" />
      <rect x={x} y={y} width="31" height="31" fill="#868686" stroke="#6c6c6c" />
      <rect x={x + 6} y={y + 6} width="19" height="19" fill="#7b7e83" />
      <text x={x + 15.5} y={y + 18.5} textAnchor="middle" fontSize="8" fontWeight="bold" textLength={w} lengthAdjust="spacingAndGlyphs" fill="#54585e">{label}</text>
    </g>
  );
}

function Label({ parts, className = "top-[7px] left-[5px]" }: { parts: [string, number][]; className?: string }) {
  return (
    <div className={`absolute flex gap-[3px] text-[#d4d4d4] ${className}`}>
      {parts.map(([t, w]) => (
        <Txt key={t} w={w}>{t}</Txt>
      ))}
    </div>
  );
}

const VP = "block font-['DejaVu_Sans_Condensed','DejaVu_Sans',sans-serif]";

function TopView() {
  return (
    <svg viewBox="415 123 626 402" className={`h-[402px] w-[626px] ${VP}`} shapeRendering="crispEdges" fill="none">
      <path d="M438.500 125v398M526.500 125v398M614.500 125v398M702.500 125v398M878.500 125v398M966.500 125v398M417 200.500h622M417 376.500h622M417 464.500h622" stroke="#4d4d4d" />
      <path d="M790.500 125v398M417 288.500h622" stroke="#000" />
      <rect x="642.500" y="161.500" width="41" height="341" stroke={DK} />
      <Burst x0={642.5} y0={167.5} x1={683.5} y1={190.5} cx={663} cy={179} r={4} c={DK} />
      <Burst x0={642.5} y0={190.5} x1={683.5} y1={215.5} cx={663} cy={203.5} r={4} c={DK} />
      <Burst x0={642.5} y0={263.5} x1={683.5} y1={288.5} cx={663} cy={275.5} r={4} c={DK} />
      <Burst x0={642.5} y0={288.5} x1={683.5} y1={311.5} cx={663} cy={300} r={4} c={DK} />
      <path d="M642 288.500h42" stroke="#000" strokeDasharray="3 2" />
      <path d="M684 178.500h156.500v24H684M684 275.500h156.500v24H684" stroke={LT} />
      <Burst x0={726.5} y0={178.5} x1={749.5} y1={202.5} cx={738} cy={190.5} r={3.5} c={LT} />
      <Burst x0={726.5} y0={275.5} x1={749.5} y1={299.5} cx={738} cy={287.5} r={3.5} c={LT} />
      <g shapeRendering="auto">
        <circle cx="984.500" cy="179.500" r="29.500" stroke="#7d8087" strokeWidth="6.500" fill="#2d2d2d" fillOpacity=".35" />
        <circle cx="984.500" cy="179.500" r="25.500" stroke="#4b4d50" strokeWidth="1.500" />
        <rect x="969.500" y="164.500" width="30" height="30" fill="#8b8b8b" stroke="#6f6f6f" />
        <rect x="975" y="170" width="19" height="19" fill="#808388" />
        <text x="984.500" y="182.500" textAnchor="middle" fontSize="8" fontWeight="bold" textLength="13" lengthAdjust="spacingAndGlyphs" fill="#54585e">TOP</text>
        <g fill="#b9b9b9" fontSize="11" fontWeight="bold" textAnchor="middle">
          <text x="984.500" y="151">N</text><text x="952" y="184">W</text><text x="1017" y="184">E</text><text x="984.500" y="217">S</text>
        </g>
      </g>
      <path d="M441.500 497v-24" stroke="#00a000" /><path d="M442 497.500h22" stroke="#c00000" />
      <g fontSize="10"><text x="442" y="473" fill="#00a000">y</text><text x="464" y="499" fill="#c00000">x</text><text x="441" y="498" fill="#0000c8">z</text></g>
    </svg>
  );
}

function FrontView() {
  return (
    <svg viewBox="1045 123 627 402" className={`h-[402px] w-[627px] ${VP}`} shapeRendering="crispEdges" fill="none">
      <path d="M1249.500 125v398M1047 138.500h623" stroke="#4d4d4d" />
      <path d="M1498.500 125v398M1047 387.500h623" stroke="#000" />
      <rect x="1079.500" y="249.500" width="116" height="119" stroke={DK} />
      <rect x="1124" y="249" width="27" height="45" fill={DK} />
      <path d="M1131.500 250v43M1134.500 250v43M1138.500 250v43M1141.500 250v43M1143.500 280v12" stroke="#353535" strokeWidth=".8" />
      <path d="M1131 279.500h14M1131 290.500h14" stroke={DK} />
      <path d="M1196 271.500h442.500v76H1196M1315.500 272v75M1381.500 272v75" stroke={LT} />
      <rect x="1337" y="271" width="23" height="61" fill={LT} />
      <path d="M1340.500 272v58M1344.500 272v58M1346.500 272v58M1349.500 272v58M1351.500 272v58M1354.500 272v58" stroke="#353535" strokeWidth=".8" />
      <path d="M1337 271.500h23" stroke={LT} />
      <g shapeRendering="auto"><FlatCube x={1600} y={164} label="FRONT" w={21} /></g>
      <path d="M1071.500 497v-24" stroke="#0000c8" /><path d="M1072 497.500h24" stroke="#c00000" />
      <g fontSize="10"><text x="1071" y="473" fill="#0000c8">z</text><text x="1096" y="499" fill="#c00000">x</text><text x="1071" y="498" fill="#00a000">y</text></g>
    </svg>
  );
}

function LeftView() {
  return (
    <svg viewBox="415 529 626 403" className={`h-[403px] w-[626px] ${VP}`} shapeRendering="crispEdges" fill="none">
      <path d="M504.500 531v399M856.500 531v399M1032.500 531v399M417 570.500h622M417 922.500h622" stroke="#4d4d4d" />
      <path d="M680.500 531v399M417 746.500h622" stroke="#000" />
      <path d="M461.500 670v48.500h48V680M467 663.500h34M655.500 677v41.500h48V680M659 663.500h38" stroke={LT} />
      <path d="M477 663h17v44h-17zM671 663h17v44h-17z" fill={LT} />
      <path d="M482.500 664v42M488.500 664v42M676.500 664v42M682.500 664v42" stroke="#353535" strokeWidth=".8" />
      <path d="M1039 648.500H426.500v84H1039M438.500 649v83M485.500 649v83M535.500 649v83M630.500 649v83M679.500 649v83M727.500 649v83" stroke={DK} />
      <path d="M452 648h20v22h-20zM501 648h19v32h-19zM645 648h20v29h-20zM695 648h18v32h-18z" fill={DK} />
      <path d="M456.500 650v19M467.500 650v19M517.500 650v29M649.500 650v26M660.500 650v26M697.500 650v29" stroke="#353535" strokeWidth=".8" />
      <g shapeRendering="auto"><FlatCube x={969} y={570} label="LEFT" w={14} /></g>
      <path d="M441.500 904v-24" stroke="#0000c8" /><path d="M422 904.500h20" stroke="#00a000" />
      <g fontSize="10"><text x="441" y="880" fill="#0000c8">z</text><text x="417" y="905" fill="#00a000">y</text><text x="442" y="905" fill="#c00000">x</text></g>
    </svg>
  );
}

function Hole({ x, y, rx, ry, light }: { x: number; y: number; rx: number; ry: number; light?: boolean }) {
  return <ellipse cx={x} cy={y} rx={rx} ry={ry} fill={light ? "url(#holeLight)" : "url(#holeDark)"} />;
}

function OrthoView() {
  return (
    <svg viewBox="1047 531 623 399" className={`h-[399px] w-[623px] ${VP}`} fill="none">
      <defs>
        <linearGradient id="sky" x1="0" y1="0" x2="0" y2="1"><stop offset="0" stopColor="#181818" /><stop offset=".5" stopColor="#363636" /><stop offset="1" stopColor="#4d4d4d" /></linearGradient>
        <linearGradient id="holeDark"><stop offset="0" stopColor="#80561c" /><stop offset=".5" stopColor="#6a4616" /><stop offset=".8" stopColor="#33220a" /><stop offset=".9" stopColor="#000" /></linearGradient>
        <linearGradient id="holeLight"><stop offset="0" stopColor="#96693c" /><stop offset=".5" stopColor="#7d5832" /><stop offset=".8" stopColor="#3d2a17" /><stop offset=".9" stopColor="#000" /></linearGradient>
      </defs>
      <rect x="1047" y="531" width="623" height="399" fill="url(#sky)" />
      <path d="M1047 580l160 85M1328 531l342 182M1621.600 531l-155 151M1346 531l-25 25M1340 736l318 169M1399 748l-78 75M1068.600 531l-21.600 22" stroke="#505050" strokeWidth=".8" />
      <path d="M1047 779l29 15M1670 753l-26 24M1577 843l-78 76" stroke="#000" />
      <path d="M1322 553.700l82.900 43.300L1063.700 930H1047V821z" fill="#b77f2e" />
      <path d="M1404.900 597v73.700L1139 930h-75.300z" fill="#7b521a" />
      <path d="M1379.600 636L1343.300 671.700l317.100 167.600 9.600-8.600v-40z" fill="#d1975a" />
      <path d="M1343.300 671.700V719l317.100 167.700v-47.400z" fill="#432d17" />
      <path d="M1660.400 839.300l9.600-8.600v47.600l-9.600 8.400z" fill="#8d6439" />
      <path d="M1233.900 777.700L1198 812.700 1417.600 930H1519z" fill="#d1975a" />
      <path d="M1198 812.700v48L1328.600 930h89z" fill="#432d17" />
      <Hole x={1337.5} y={601.3} rx={11.5} ry={8.5} />
      <Hole x={1300.4} y={636.3} rx={11.5} ry={8.5} />
      <Hole x={1192.2} y={741.7} rx={11.5} ry={8.2} />
      <Hole x={1155.9} y={777.3} rx={10.8} ry={7.8} />
      <Hole x={1470.6} y={712} rx={10} ry={7.2} light />
      <Hole x={1324.9} y={853.3} rx={10} ry={7.2} light />
      <ellipse cx="1615.500" cy="599" rx="31" ry="23" stroke="#787b82" strokeWidth="6.500" fill="#222" fillOpacity=".6" />
      <ellipse cx="1615.500" cy="599" rx="27" ry="19.500" stroke="#4b4d50" />
      <path d="M1612.700 563l22.300 10.500-2 21-15 14.500-20.500-12.500-1.500-21z" fill="#868686" />
      <path d="M1612.700 563l22.300 10.500-17 12-22-10z" fill="#939393" />
      <path d="M1618 585.500l17-12-2 21-15 14.500z" fill="#7b7b7b" />
      <g fill="#686b70" fontSize="6">
        <text x="1610" y="576" transform="rotate(22 1610 576)" textLength="12">TOP</text>
        <text x="1599" y="590" transform="rotate(24 1599 590)" textLength="16" lengthAdjust="spacingAndGlyphs">FRONT</text>
        <text x="1622" y="598" transform="rotate(-38 1622 598)" textLength="12">LEFT</text>
      </g>
      <g fill="#b9b9b9" fontSize="10" fontWeight="bold" textAnchor="middle">
        <text x="1590" y="585" transform="rotate(-30 1590 582)">W</text><text x="1593" y="622" transform="rotate(30 1593 619)">S</text><text x="1645" y="616" transform="rotate(30 1645 613)">E</text>
        <text x="1638" y="580" fontSize="6">N</text>
      </g>
      <path d="M1071.500 905v-17" stroke="#0000c8" /><path d="M1072 905l14-13" stroke="#00a000" /><path d="M1072 905l20 9.500" stroke="#d00000" />
      <g fontSize="10"><text x="1071" y="888" fill="#0000c8">z</text><text x="1086" y="891" fill="#30a020">y</text><text x="1092" y="916" fill="#d00000">x</text></g>
    </svg>
  );
}

function Viewports() {
  return (
    <div className="grid grid-cols-[626px_627px] grid-rows-[402px_403px] gap-1">
      <div className="relative bg-[#353535] shadow-[inset_0_0_0_2px_#303030]">
        <TopView />
        <Label parts={[["[+]", 19], ["[Top ]", 29], ["[Standard ]", 56], ["[Wireframe ]", 61]]} />
      </div>
      <div className="relative bg-[#353535] shadow-[inset_0_0_0_2px_#303030]">
        <FrontView />
        <Label parts={[["[+]", 19], ["[Front ]", 38], ["[Standard ]", 56], ["[Wireframe ]", 61]]} />
      </div>
      <div className="relative bg-[#353535] shadow-[inset_0_0_0_2px_#303030]">
        <LeftView />
        <Label parts={[["[+]", 19], ["[Left ]", 31], ["[Standard ]", 56], ["[Wireframe ]", 61]]} />
      </div>
      <div className="relative border-2 border-[#7d6622]">
        <OrthoView />
        <Label className="top-[5px] left-[3px]" parts={[["[+]", 19], ["[Orthographic ]", 75], ["[Standard ]", 56], ["[Default Shading ]", 88]]} />
      </div>
    </div>
  );
}

const PANEL_TABS: ReactNode[] = [
  <path d="M15 5v16M7 13h16" stroke="#9a9a9a" strokeWidth="2" />,
  <><path d="M8 5.500h14v14H8z" stroke={T} /><path d="M6.500 4.500h3v3h-3zM20.500 4.500h3v3h-3zM6.500 17.500h3v3h-3zM20.500 17.500h3v3h-3z" fill="#3a3a3a" stroke={T} /><path d="M11 16.500q1-7 8-8" stroke={G} strokeWidth="2.500" /></>,
  <><path d="M9 6h12v5H9z" fill="#969696" /><path d="M15 11v5M9.500 19v-4h11v4" stroke="#3c8585" /><path d="M8 19h4v3H8zM18.500 19h4v3h-4z" fill="#3c8585" /></>,
  <><circle cx="17" cy="12.500" r="6" fill="#969696" /><path d="M10.500 6.500q-4 6 0 12M8 7.500q-3 5 0 10M13 6q-4.500 6 0 13" stroke="#3c8585" /></>,
  <path d="M7 6h16v10H7zM11 18.500h8v2h-8z" fill="#969696" />,
  <path d="M7.500 7.500q2 3 4.500.5 1-2-1.500-3.500 4-.5 5 3 0 2-.5 2.500l7.500 6.500q1.500 3-2 3.500L13 12.500q-4 2-6-2-.5-1.500.5-3z" fill="#9a9a9a" />,
];

const MODS: [string, number][] = [
  ["Mesh Select", 58], ["Patch Select", 60], ["SplineSelect", 58], ["Poly Select", 53], ["Vol. Select", 50], ["FFD Select", 52], ["Surface Select", 70],
];

function CommandPanel() {
  return (
    <div className="flex w-[243px] flex-1 flex-col">
      <div className="flex h-[26px] gap-0.5">
        {PANEL_TABS.map((t, i) => (
          <svg key={i} viewBox="0 0 30 26" fill="none" className={`w-[30px] rounded-t-[4px] ${i === 1 ? "h-[27px] border-x border-t border-[#3a3a3a] bg-[#444]" : "h-[26px] bg-[#3b3b3b]"}`}>{t}</svg>
        ))}
      </div>
      <div className="flex flex-1 flex-col border-t border-l border-[#3a3a3a] pl-1">
        <div className="mt-[7px] flex">
          <div className="h-5 w-[210px] border border-[#3c3c3c] bg-[#5a5a5a]" />
          <div className="ml-[6px] h-5 w-4 border-t border-l border-r-2 border-b-2 border-[#111] border-t-[#777] border-l-[#777] bg-[#c42f80]" />
        </div>
        <div className="mt-[9px] flex h-[21px] w-[234px] items-center border border-[#3c3c3c] bg-[#646464] pl-[2px] text-[#e8e8e8]">
          <Txt w={58} className="mt-0.5">Modifier List</Txt>
          <Down className="ml-auto mr-[7px] -mt-0.5" />
        </div>
        <div className="mt-[11px] ml-px grid grid-cols-[112px_112px] gap-x-[5px] gap-y-[3.5px] text-[#8c8c8c]">
          {MODS.map(([m, w]) => (
            <div key={m} className="flex h-[19px] items-center justify-center rounded-[3px] border border-[#3c3c3c] bg-[#575757]">
              <Txt w={w} className="mt-0.5">{m}</Txt>
            </div>
          ))}
        </div>
        <div className="mt-[7.5px] -ml-px h-[129px] w-[235px] shrink-0 border border-[#80808c] shadow-[inset_0_0_0_1px_#fff]" />
        <div className="mt-[3px] flex h-[26px] items-center">
          <svg viewBox="0 0 16 16" className="ml-[3px] size-4"><path d="M1 15l5-5M4.500 7.500l4 4 2-2 1-3L15 4l-3.500-3L9 4.500 6 5z" fill="#666" stroke="#222" strokeWidth="1.400" /></svg>
          <Sep className="ml-[10px]" />
          <div className="ml-[6px] flex size-[22px] items-center justify-center rounded-[3px] bg-[#4e5e78]">
            <svg viewBox="0 0 10 18" className="h-[17px] w-[10px]"><path d="M1 1.500h8v2H8v11q-3 3-6 0v-11H1z" fill="#66707f" stroke="#2a2f38" /></svg>
          </div>
          <Sep className="ml-[7px]" />
          <svg viewBox="0 0 17 17" className="ml-[9px] size-[17px]" fill="#555" stroke="#232323" strokeWidth="1.300"><circle cx="4.500" cy="4.500" r="3.300" /><path d="M9 3.500h5M13 3.500v4" /><circle cx="7.500" cy="12" r="3.300" /><circle cx="12.500" cy="11.500" r="3.600" /></svg>
          <svg viewBox="0 0 14 17" className="ml-[9px] h-[17px] w-3" fill="#555" stroke="#232323" strokeWidth="1.300"><path d="M1 3.500h12M5 3V1h4v2M2.500 5.500h9V16h-9zM5.500 7v7M8.500 7v7" /></svg>
          <Sep className="ml-[12px]" />
          <svg viewBox="0 0 16 16" className="ml-[9px] size-4"><path d="M1 1h14v14H1z" fill={G} /><path d="M3 4h5M3 7h3v2.500H3zM9 7h3v2.500H9zM3 11.500h3V14H3zM9 11.500h3V14H9z" stroke="#333" fill="none" /><path d="M8 9l7-8" stroke={D} strokeWidth="3.500" /><path d="M8 9l7-8" stroke={O} strokeWidth="2.200" /></svg>
        </div>
        <div className="mt-[15px] flex items-center">
          <div className="ml-1 h-px w-[102px] bg-[#636363]" />
          <Dots className="ml-[3px] w-[13px]" />
          <div className="ml-1 h-px w-[102px] bg-[#636363]" />
        </div>
        <div className="mt-1 mr-[3px] flex-1 self-end rounded-t-[3px] border-l border-[#3c3c3c] bg-[#3f3f3f] pl-[5px]" />
      </div>
    </div>
  );
}

function LayoutStrip() {
  return (
    <div className="-mr-10 flex w-10 shrink-0 flex-col bg-linear-to-r from-[#323232] from-85% to-[#262626]">
      <div className="flex-1" />
      <div className="ml-[10px] flex size-[19px] items-center justify-center rounded-[3px] bg-[#4b4b4b]">
        <svg viewBox="0 0 6 10" className="h-[9px] w-[6px]"><path d="M0 0l6 5-6 5z" fill="#ddd" /></svg>
      </div>
      <div className="mt-[11px] mb-0.5 ml-1 flex h-11 items-center justify-center rounded-l-[4px] border border-r-0 border-[#26364c] bg-linear-to-b from-[#5a6a82] to-[#3f78cc]">
        <div className="grid h-[28px] w-8 grid-cols-2 gap-px">
          {[0, 1, 2, 3].map((i) => <div key={i} className="border border-[#26313f] bg-[#5d6470]" />)}
        </div>
      </div>
    </div>
  );
}

function TimeSlider() {
  return (
    <div className="flex h-[26px] items-start text-[#cfcfcf]">
      <VDots className="mt-2 ml-0.5 -mb-8 h-[42px]" />
      <div className="flex pt-[5px] pl-[5px]">
        <div className="flex h-4 w-[14px] items-center justify-center rounded-[3px] bg-[#656565] pt-px">&lt;</div>
        <div className="ml-0.5 flex h-4 w-[123px] items-center justify-center rounded-[3px] bg-[#656565] pt-0.5"><Txt w={34}>0 / 100</Txt></div>
        <div className="ml-0.5 flex h-4 w-[14px] items-center justify-center rounded-[3px] bg-[#656565] pt-px">&gt;</div>
      </div>
    </div>
  );
}

function TrackBar() {
  const step = 17.972;
  return (
    <div className="ml-[9px] flex h-[27px] border-t border-black">
      <div className="flex w-[50px] items-center justify-center">
        <svg viewBox="0 0 15 12" className="-mt-0.5 -ml-2 h-3 w-[15px]" fill="none"><path d="M0 1.500h3M0 4h3M0 6.500h3M0 9h3M0 11h3" stroke={G} /><path d="M4 6h2q1-5 2.500-5T10 6t2 5 2.500-4" stroke={T} strokeWidth="1.300" /></svg>
      </div>
      <svg viewBox="59 959 1811 24" className="h-6 w-[1811px] overflow-visible bg-[#282828]" shapeRendering="crispEdges">
        {Array.from({ length: 101 }, (_, i) => (
          <path key={i} d={`M${66.5 + i * step} 959v${i % 5 === 0 ? 24 : 11}`} stroke="#6a6a6a" />
        ))}
        <rect x="63" y="960" width="7" height="23" fill="#8b8320" />
        <path d="M66.500 959v23" stroke="#c4bb4a" />
        {Array.from({ length: 21 }, (_, i) => (
          <text key={i} x={65.5 + i * 5 * step} y="981.500" textAnchor="middle" fontSize="11.500" textLength={i === 0 ? 6 : i < 20 ? (i === 1 ? 6 : 12) : 16.5} lengthAdjust="spacingAndGlyphs" fill={i === 0 ? "#d8cf55" : "#c0c0c0"} className="font-['DejaVu_Sans_Condensed','DejaVu_Sans',sans-serif]">{i * 5}</text>
        ))}
      </svg>
    </div>
  );
}

function Coord({ label, value, w, className = "" }: { label: string; value: string; w: number; className?: string }) {
  return (
    <div className={`flex items-center ${className}`}>
      <div className="w-[13px] text-[#e8e8e8]"><Txt w={10}>{label}</Txt></div>
      <div className="flex h-[19px] w-[59px] items-center border border-[#3c3c3c] bg-[#555] pl-[3px] pt-0.5 text-[#8a8a8a]"><Txt w={w}>{value}</Txt></div>
    </div>
  );
}

function StatusBar() {
  return (
    <div className="flex h-[55px] pt-px text-[#f0f0f0]">
      <div className="mt-[3px] ml-1 flex w-[98px] flex-col">
        <div className="h-[23px] border-2 border-[#f2f2f2] border-t-[#777] border-l-[#999] bg-[#dbc3c3]" />
        <div className="h-[23px] overflow-hidden border-2 border-[#f2f2f2] border-t-[#777] border-l-[#999] bg-white pl-1 font-['Liberation_Mono',monospace] text-[12px] leading-[18px] whitespace-nowrap text-[#777]"><Txt w={91}>MAXScript Min</Txt></div>
      </div>
      <div className="mt-px ml-[3px] h-[51px] w-[3px] border-r border-black bg-[#383838]" />
      <div className="ml-[3px] flex w-[913px] flex-col">
        <Txt w={69} className="mt-[9px] h-[25px] self-start leading-[16px]">None Selected</Txt>
        <Txt w={199} className="self-start leading-[16px]">Click and drag to select and move objects</Txt>
      </div>
      <div className="flex flex-col">
        <div className="mt-[7px] flex h-[20px] items-center">
          <svg viewBox="0 0 16 16" className="-mt-0.5 size-4" fill="none" stroke="#222" strokeWidth="1.300"><path d="M4.500 4.500h7v7h-7zM1 4V1h3M12 1h3v3M15 12v3h-3M4 15H1v-3M2 2l2.500 2.500M14 2l-2.500 2.500M14 14l-2.500-2.500M2 14l2.500-2.500" /></svg>
          <svg viewBox="0 0 12 16" className="-mt-0.5 ml-[13px] h-4 w-3"><path d="M3 7V4.500a3 3 0 0 1 6 0V7" fill="none" stroke="#222" strokeWidth="1.500" /><rect x=".8" y="7" width="10.400" height="8" rx="1" fill="#555" stroke="#222" /><path d="M5.300 9.500h1.500v3H5.300z" fill="#111" /></svg>
          <svg viewBox="0 0 15 15" className="-mt-0.5 ml-[13px] size-[15px]"><path d="M.5.500h14v14H.5z" fill="#333" stroke={G} /><circle cx="7.500" cy="7.500" r="3.200" stroke={G} strokeWidth="1.700" fill="none" /><path d="M7.500 1v3M7.500 11v3M1 7.500h3M11 7.500h3M1 1h4L1 5zM14 1h-4l4 4zM1 14h4l-4-4zM14 14h-4l4-4z" stroke={G} fill={G} strokeWidth=".8" /></svg>
          <Coord className="ml-[9px]" label="X:" value="-12,222" w={38} />
          <Coord className="ml-[12px]" label="Y:" value="5,983" w={28} />
          <Coord className="ml-[12px]" label="Z:" value="0,0" w={17} />
          <Txt w={55} className="ml-[14px]">Grid = 10,0</Txt>
        </div>
        <div className="mt-[3px] flex items-center self-end">
          <div className="mr-px h-4 w-px bg-black" />
          <div className="flex h-5 w-[21px] items-center justify-center rounded-[3px] bg-[#5f8ac1]">
            <svg viewBox="0 0 14 14" className="size-[14px]" fill="none"><path d="M7 .8l5.500 3v6.500L7 13.200l-5.500-3V3.800zM1.500 3.800L7 7l5.500-3.200M7 7v6" stroke="#333" strokeWidth="2.400" /><path d="M7 .8l5.500 3v6.500L7 13.200l-5.500-3V3.800zM1.500 3.800L7 7l5.500-3.200M7 7v6" stroke="#ddd" strokeWidth="1.100" /></svg>
          </div>
          <Txt w={65} className="mt-px -mr-[10px] ml-[5px] text-[#d8d8d8]">Add Time Tag</Txt>
        </div>
      </div>
      <Playback />
    </div>
  );
}

function Playback() {
  return (
    <div className="ml-[56px] flex">
      <div className="flex flex-col">
        <svg viewBox="1467 990 118 46" className="mt-1 h-[46px] w-[118px]" fill={G}>
          <path d="M1469 996h1.600v10H1469zM1476.500 996v10l-5.500-5zM1483 996v10l-5.500-5z" />
          <path d="M1489 993h1v15h-1zM1489 1015h1v16h-1zM1561 993h1v15h-1zM1562 1015h1v16h-1z" fill="#111" />
          <path d="M1501.500 996v10l-6.500-5zM1503 996h2v10h-2zM1507 996h2v10h-2z" />
          <path d="M1519 994l12 7-12 7zM1536 1006v4h-4z" />
          <path d="M1541 996h2v10h-2zM1545 996h2v10h-2zM1548.500 996v10l6-5zM1567 996v10l5.500-5zM1573 996v10l5.500-5zM1579 996h1.600v10h-1.600z" />
          <path d="M1474.500 1018v10l-4.500-5zM1477 1018v10l4.500-5z" />
          <rect x="1491.500" y="1014.500" width="69" height="17" fill="#5c5c5c" stroke="#3c3c3c" />
          <text x="1494.500" y="1028" fontSize="11.500" className="font-['DejaVu_Sans_Condensed','DejaVu_Sans',sans-serif]" fill="#d8d8d8">0</text>
          <path d="M1551.500 1021.500l3-3.500 3 3.500zM1551.500 1024.500l3 3.500 3-3.500z" />
          <circle cx="1573" cy="1021" r="5" /><path d="M1573 1017v4h3" stroke="#333" fill="none" />
          <circle cx="1578" cy="1026" r="3" stroke={D} strokeWidth="4" fill="none" /><circle cx="1578" cy="1026" r="2.800" stroke={O} strokeWidth="2" fill={D} />
        </svg>
      </div>
      <div className="mt-[5px] ml-[12px] flex h-[43px] w-[42px] items-center justify-center rounded-[3px] bg-[#656565]">
        <svg viewBox="0 0 30 30" className="size-[30px]" fill="none"><path d="M14 1v24M2 13h24" stroke="#444" strokeWidth="6" /><path d="M14 1.500v23M2.500 13h23" stroke="#dedede" strokeWidth="4.500" /><circle cx="18" cy="24" r="3" stroke="#444" strokeWidth="4" /><path d="M20 22l8-7M25 17.500l2 2" stroke="#444" strokeWidth="4" /><circle cx="18" cy="24" r="3" stroke={T} strokeWidth="2" /><path d="M20 22l8-7M25 17.500l2.500 2.500" stroke={T} strokeWidth="1.800" /></svg>
      </div>
      <div className="mt-[5px] ml-[5px] flex w-[46px] flex-col gap-[2px] text-[#dcdcdc]">
        <div className="flex h-5 items-center justify-center rounded-[3px] bg-[#656565] pt-0.5"><Txt w={44}>Auto Key</Txt></div>
        <div className="flex h-5 items-center justify-center rounded-[3px] bg-[#656565] pt-0.5"><Txt w={37}>Set Key</Txt></div>
      </div>
      <div className="mt-[5px] ml-[5px] flex w-[114px] flex-col gap-1 text-[#dcdcdc]">
        <div className="flex h-[19px] items-center bg-[#626262] pl-[5px] pr-[7px]"><Txt w={41} className="mt-0.5">Selected</Txt><Down className="ml-auto" /></div>
        <div className="flex">
          <svg viewBox="0 0 19 17" className="mt-0.5 ml-1 h-[17px] w-[19px]" fill="none"><path d="M1 3h12" stroke={G} /><path d="M5.500 1h4v4h-4z" fill="#444" stroke={G} /><path d="M3 15q3-3 2-9M12 15q-3-3-2-9" stroke={T} strokeWidth="1.800" /><path d="M19 13v4h-4z" fill="#e4e4e4" /></svg>
          <div className="ml-auto flex h-[20px] w-[88px] items-center justify-center rounded-[3px] bg-[#656565] pt-0.5 pr-1"><Txt w={62}>Key Filters...</Txt></div>
        </div>
      </div>
      <svg viewBox="1821 992 92 42" className="mt-[5px] ml-[12px] h-[42px] w-[92px]" fill="none">
        <circle cx="1831" cy="999" r="4.500" stroke={G} strokeWidth="1.800" /><path d="M1828 1002l-6 6" stroke={G} strokeWidth="2.500" />
        <path d="M1850 993h4v4h-4zM1855 993h4v4h-4zM1855 998h4v4h-4z" fill={T} /><circle cx="1852" cy="1001" r="3.400" stroke={G} strokeWidth="1.600" fill="#444" /><path d="M1850 1003l-3 4" stroke={G} strokeWidth="2" />
        <path d="M1868.500 997v-3h3M1878 994h3.500v3M1868.500 1004v3h3" stroke={G} strokeWidth="1.200" /><path d="M1875 995l5.500 3v5l-5.500 3-5.500-3v-5z" fill={T} /><path d="M1884 1006v4h-4z" fill={G} />
        <path d="M1901 994l4 2v8l-4 2-3-2v-8z" fill={T} /><path d="M1892 1002h3v3h-3zM1896 1000h3v3h-3zM1896 1004h3v3h-3z" fill={G} /><path d="M1908 1006v4h-4z" fill={G} />
        <path d="M1822.500 1016.500h13v12h-13z" stroke={G} strokeWidth="1.300" strokeDasharray="2.500 1.500" /><circle cx="1829.500" cy="1022" r="3.200" stroke={T} strokeWidth="1.700" fill="#444" /><path d="M1827 1025l-4 4" stroke={T} strokeWidth="1.800" />
        <path d="M1846.500 1023l2.500 1.500-1-6h1.500l1.500 4v-6h1.500l.5 6 .8-6h1.500v6l1-4h1.200v7l-1.500 5h-5z" fill={G} /><path d="M1862 1029v4h-4z" fill={G} />
        <circle cx="1874.500" cy="1022" r="5.500" fill={G} /><path d="M1874 1022v-5.500a5.500 5.500 0 0 0-5 5.500z" fill={T} /><path d="M1869 1029q8-2 12-11 2-3-2-1.500M1869 1029q-2-1 1-4" stroke={G} strokeWidth="1.300" /><path d="M1884 1029v4h-4z" fill={G} />
        <path d="M1891 1016h14v14h-14z" fill={G} /><path d="M1894 1027l8-8M1897 1018.500h5.500v5.500M1893.500 1023v4.500h4.500" stroke="#333" strokeWidth="1.300" />
      </svg>
    </div>
  );
}

function TaskButton({ children, className }: { children: ReactNode; className: string }) {
  return <div className={`flex h-[38px] items-center justify-center rounded-[2px] border border-[#16293f] shadow-[inset_0_0_0_1px_#9db2ca] ${className}`}>{children}</div>;
}

function Taskbar() {
  return (
    <div className="flex h-10 border-t border-[#8aa5c2] bg-[linear-gradient(90deg,#2b4f7a_0,#33608f_240px,#3a6794_370px,#37618f_383px,#b3d6fa_392px,#b3d6fa_1568px,#3a6591_1580px,#35608d_1620px,#2a4b70_1650px,#2a4b70_1920px)]">
      <svg viewBox="0 0 38 38" className="ml-2 size-[38px]">
        <defs>
          <radialGradient id="orb" cx=".5" cy=".95" r=".9"><stop offset="0" stopColor="#2fe0ff" /><stop offset=".45" stopColor="#1878b4" /><stop offset="1" stopColor="#123d66" /></radialGradient>
          <linearGradient id="orbShine" x1="0" y1="0" x2="0" y2="1"><stop offset="0" stopColor="#c5d6e4" /><stop offset="1" stopColor="#4b7aa4" stopOpacity=".3" /></linearGradient>
        </defs>
        <circle cx="19" cy="19" r="18" fill="url(#orb)" stroke="#1a2f4a" />
        <path d="M3 17a16 16 0 0 1 32 0q-16 5-32 0z" fill="url(#orbShine)" />
        <path d="M10 11q4-3 8-1l-1.500 8q-4-2-8 0z" fill="#e8622c" /><path d="M19.500 10.500q4 2 9-1l-1.500 8q-4.500 3-9 1z" fill="#9bc53a" />
        <path d="M8 20q4-2.500 8-.5l-1.500 8q-4-2-8 .5z" fill="#3f8fd8" /><path d="M17.500 20q4 2 9-1l-1.500 8q-4.500 3-9 1z" fill="#f9c22e" />
      </svg>
      <TaskButton className="ml-[14px] w-[58px] bg-linear-to-b from-[#8ca1bb] to-[#4a6d97]">
        <svg viewBox="0 0 34 32" className="h-[32px] w-[34px]">
          <path d="M2 2h10l2 3h16v23H2z" fill="#eed67c" stroke="#c5a548" /><path d="M14 4h7l2 2h9v22H14z" fill="#f3dd8c" stroke="#c5a548" /><path d="M2 10h30v18H2z" fill="#f7e6a2" />
          <path d="M5 3h4v2H5z" fill="#1ea81e" /><path d="M13 5h4v2h-4z" fill="#d8402c" /><path d="M22 6h5v2h-5z" fill="#2f86d8" />
          <path d="M5 31V22q0-3 3-3h18q3 0 3 3v9h-5v-5H10v5z" fill="#8cc8ec" stroke="#4c98c8" />
        </svg>
      </TaskButton>
      <TaskButton className="ml-1 w-[58px] bg-linear-to-b from-[#8096b3] to-[#4a6d97]">
        <svg viewBox="0 0 32 32" className="size-8">
          <circle cx="16" cy="16" r="15" fill="#5f2b83" stroke="#e8e0ee" strokeWidth="1.500" /><path d="M1.500 15a14.500 14.500 0 0 1 29 0z" fill="#8b46a6" opacity=".6" />
          <path d="M8 8l4 2.500q4-.8 8 0L24 8q1 3 .3 5 1.700 3 .5 6.500-2 4.500-8.800 4.500t-8.800-4.500Q6 16 7.700 13 7 11 8 8z" fill="#fff" />
        </svg>
      </TaskButton>
      <TaskButton className="ml-1 w-[54px] bg-linear-to-b from-[#d6dde6] to-[#90a8c4]">
        <svg viewBox="0 0 32 32" className="size-8">
          <rect width="32" height="32" fill="#d9e8e8" />
          <path d="M10 6q2-3 6-3 6 0 6 5t-5 5q6 0 6 5.500t-7 5.500q-4 0-6.500-3" fill="none" stroke="#0b8c92" strokeWidth="4.500" />
          <text x="17" y="30" fontSize="5.500" fontWeight="bold" fill="#0b8c92" className="font-['Liberation_Sans',sans-serif]">MAX</text>
        </svg>
      </TaskButton>
      <div className="h-[38px] w-1 rounded-r-[3px] border border-l-0 border-[#16293f] bg-[#8aa2bf]" />
      <div className="flex-1" />
      <div className="flex items-center font-['Open_Sans'] text-[12px] text-white">
        <Txt w={10} className="-mt-1">IT</Txt>
        <svg viewBox="1682 1045 140 30" className="ml-[18px] h-[30px] w-[140px]" fill="none">
          <path d="M1683 1053h7v-2h-7zM1682 1055h9v9q0 3-4.500 3t-4.500-3z" fill="#9a9a9a" stroke="#555" strokeWidth=".6" /><circle cx="1692" cy="1065" r="5" fill="#27a32b" /><path d="M1689.500 1065l2 2.200 3.200-4.500" stroke="#fff" strokeWidth="1.500" />
          <circle cx="1714" cy="1061" r="7.500" fill="#3a3a3a" /><circle cx="1714" cy="1061" r="5.500" stroke="#e8e8e8" strokeWidth="1.600" strokeDasharray="24 6" /><circle cx="1714" cy="1061" r="2.500" stroke="#e8e8e8" strokeWidth="1.500" />
          <rect x="1730.500" y="1053.500" width="15" height="15" fill="#6fbf3b" stroke="#d5f0bc" /><path d="M1738 1056q3 1.500 5 1v4q0 4-5 6-5-2-5-6v-4q2 .5 5-1z" fill="#fff" /><path d="M1738 1057v10M1733 1061h10" stroke="#6fbf3b" />
          <path d="M1754 1058h4l5-5v16l-5-5h-4z" fill="#d8573c" stroke="#7d2a1a" /><path d="M1765 1057q2 4 0 8M1768 1055q3 6 0 12" stroke="#6d3a33" strokeWidth="1.200" />
          <path d="M1783 1056h10v9h-10z" fill="#24456b" stroke="#e8e8e8" /><path d="M1779.500 1053v6h5v-6M1782 1059v8h4" stroke="#e8e8e8" strokeWidth="1.400" /><path d="M1789 1058l5.500 10h-11z" fill="#f4cf1b" stroke="#8a6f00" strokeWidth=".6" /><path d="M1789 1061v4" stroke="#222" strokeWidth="1.200" />
          <path d="M1803 1058h3l5-5v16l-5-5h-3z" fill="#f2f2f2" /><circle cx="1812.500" cy="1065" r="4.600" fill="#fff" stroke="#d81e1e" strokeWidth="1.800" /><path d="M1809.500 1062l6 6" stroke="#d81e1e" strokeWidth="1.800" />
        </svg>
        <div className="ml-[12px] flex w-[58px] flex-col items-center leading-[17px]">
          <Txt w={28}>12:07</Txt>
          <Txt w={58}>23/11/2017</Txt>
        </div>
      </div>
      <div className="ml-[13px] h-[39px] w-[14px] border border-[#8fa6c0] bg-linear-to-b from-[#7b93ae] via-[#2f4f72] to-[#34557a]" />
    </div>
  );
}

export default function App() {
  return (
    <div className="flex h-[1080px] w-[1920px] flex-col overflow-hidden bg-[#444] font-['DejaVu_Sans_Condensed','DejaVu_Sans',sans-serif] text-[11px]">
      <TitleBar />
      <MenuBar />
      <Toolbar />
      <Ribbon />
      <div className="flex h-[814px]">
        <div className="flex w-[415px] flex-col">
          <div className="flex h-[14px] items-center pt-1">
            <Dots className="ml-0.5 w-[73px]" />
            <Dots className="ml-2 w-[325px]" />
          </div>
          <div className="flex flex-1">
            <LayoutStrip />
            <Explorer />
          </div>
        </div>
        <div className="pt-[5px]"><Viewports /></div>
        <div className="flex flex-1 flex-col pl-[5px]">
          <div className="flex h-[14px] items-center pt-1">
            <Dots className="ml-px w-[240px]" />
          </div>
          <CommandPanel />
        </div>
      </div>
      <TimeSlider />
      <TrackBar />
      <StatusBar />
      <Taskbar />
    </div>
  );
}
